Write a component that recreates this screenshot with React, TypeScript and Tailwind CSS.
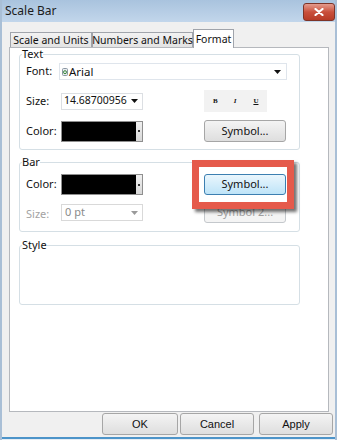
import type { ReactNode } from 'react'

// small combo arrow
const Arrow = ({ grey }: { grey?: boolean }) => (
  <svg width="7" height="4" viewBox="0 0 7 4" className="shrink-0">
    <path d="M0 0h7L3.5 4z" fill={grey ? '#9a9a9a' : '#111'} />
  </svg>
)

const WinButton = ({ children, className = '' }: { children: ReactNode; className?: string }) => (
  <div
    className={`flex items-center justify-center rounded-[3px] border border-[#a6a6a6] bg-linear-to-b from-[#f4f4f4] to-[#dedede] ${className}`}
  >
    {children}
  </div>
)

const ColorBox = () => (
  <div className="flex h-[21px] w-[82px] border border-[#8f8f8f]">
    <div className="flex-1 bg-black" />
    <div className="flex w-[6px] items-center justify-center bg-linear-to-b from-[#f0f0f0] to-[#d8d8d8]">
      <div className="h-[2px] w-[2px] bg-[#333]" />
    </div>
  </div>
)

const Group = ({ title, children, className = '' }: { title: string; children?: ReactNode; className?: string }) => (
  <fieldset className={`w-[281px] rounded-[3px] border border-[#d5dfe5] ${className}`}>
    <legend className="ml-[2px] leading-[12px] text-[11px] text-[#111]">{title}</legend>
    {children}
  </fieldset>
)

const tabs = [
  { label: 'Scale and Units', w: 'w-[82px]' },
  { label: 'Numbers and Marks', w: 'w-[101px]' },
]

export default function App() {
  return (
    <div className="relative flex h-[440px] w-[337px] flex-col overflow-hidden border-x-[2px] border-[#a9bfd6] bg-[#f0f0f0] font-['Noto_Sans',sans-serif] text-[11px] text-[#111]">
      {/* title bar */}
      <div className="flex h-[22px] shrink-0 items-start bg-linear-to-b from-[#a9c3de] to-[#c2d6eb]">
        <span className="pl-[3px] pt-[3px] text-[12px] leading-[16px] text-[#1b1b1b]">Scale Bar</span>
        <div className="ml-auto mt-[3px] flex h-[18px] w-[32px] items-center justify-center rounded-[3px] border border-[#7d3428] bg-linear-to-b from-[#e49b8e] via-[#c9503c] to-[#b73b26]">
          <svg width="10" height="8" viewBox="0 0 10 8">
            <path d="M1.5 1l7 6M8.5 1l-7 6" stroke="#fff" strokeWidth="2.2" strokeLinecap="round" />
          </svg>
        </div>
      </div>

      {/* tabs */}
      <div className="relative z-10 mt-[7px] flex h-[18px] items-end pl-[8px]">
        {tabs.map((t) => (
          <div
            key={t.label}
            className={`flex h-[15px] ${t.w} items-center justify-center whitespace-nowrap border border-b-0 border-[#a0a4ab] bg-linear-to-b from-[#f2f2f2] to-[#e3e3e3] text-[10.5px] leading-[13px]`}
          >
            {t.label}
          </div>
        ))}
        <div className="-mb-px flex h-[19px] w-[41px] items-center justify-center whitespace-nowrap border border-b-0 border-[#a0a4ab] bg-white text-[10.5px] leading-[13px]">
          Format
        </div>
      </div>

      {/* tab panel */}
      <div className="ml-[7px] h-[365px] w-[320px] shrink-0 border border-[#b5b8bd] bg-white pl-[9px]">
        <Group title="Text">
          <div className="mt-[3px] flex h-[17px] items-center pl-[6px]">
            <span className="w-[33px]">Font:</span>
            <div className="flex h-[17px] w-[228px] items-center border border-[#dfe5ec] pl-[2px] pr-[5px]">
              <svg width="6" height="8" viewBox="0 0 6 8" className="mr-[1px]">
                <rect x="0.5" y="0.5" width="5" height="7" rx="1" fill="#e8ecef" stroke="#8b97a3" />
                <circle cx="3" cy="4.2" r="1.5" fill="none" stroke="#3b8a3e" strokeWidth="1" />
              </svg>
              <span className="text-[11.5px]">Arial</span>
              <div className="ml-auto">
                <Arrow />
              </div>
            </div>
          </div>

          <div className="mt-[10px] flex h-[22px] items-center pl-[6px]">
            <span className="w-[35px]">Size:</span>
            <div className="flex h-[17px] w-[82px] items-center border border-[#dcdfe3] pl-[2px] pr-[4px]">
              <span className="whitespace-nowrap text-[10.5px]">14.68700956</span>
              <div className="ml-auto">
                <Arrow />
              </div>
            </div>
            <div className="ml-[61px] flex h-[22px] w-[63px] items-center bg-[#f2f2f2] font-['Liberation_Serif',serif] text-[7px] font-bold">
              <span className="ml-[9px]">B</span>
              <span className="ml-[16px] italic">I</span>
              <span className="ml-[17px] underline">U</span>
            </div>
          </div>

          <div className="mb-[7px] mt-[8px] flex h-[22px] items-center pl-[6px]">
            <span className="w-[35px]">Color:</span>
            <ColorBox />
            <WinButton className="ml-[61px] h-[22px] w-[82px]">Symbol...</WinButton>
          </div>
        </Group>

        <Group title="Bar" className="mt-[6px]">
          <div className="mt-[6px] flex h-[21px] items-center pl-[6px]">
            <span className="w-[35px]">Color:</span>
            <ColorBox />
            <div className="ml-[61px] flex h-[21px] w-[82px] items-center justify-center rounded-[3px] border border-[#3c7fb1] bg-linear-to-b from-[#eaf6fd] to-[#bee4f8]">
              Symbol...
            </div>
          </div>
          <div className="mb-[8px] mt-[7px] flex h-[21px] items-start pl-[6px]">
            <span className="mt-[4px] w-[35px] text-[#a3a3a3]">Size:</span>
            <div className="mt-[2px] flex h-[17px] w-[82px] items-center border border-[#d9d9d9] pl-[3px] pr-[4px] text-[#8a8a8a]">
              <span>0 pt</span>
              <div className="ml-auto">
                <Arrow grey />
              </div>
            </div>
            <div className="ml-[61px] flex h-[21px] w-[82px] items-center justify-center rounded-[3px] border border-[#c4c8cc] bg-[#f4f4f4] text-[#a0a0a0]">
              Symbol 2...
            </div>
          </div>
        </Group>

        <Group title="Style" className="mt-[7px]">
          <div className="h-[53px]" />
        </Group>
      </div>

      {/* dialog buttons */}
      <div className="mt-[1px] flex h-[22px] pl-[100px] font-['Liberation_Sans',sans-serif] text-[11px]">
        <WinButton className="h-[22px] w-[76px] border-[#7a7a7a]">OK</WinButton>
        <WinButton className="ml-[2px] h-[22px] w-[74px] border-[#7a7a7a]">Cancel</WinButton>
        <WinButton className="ml-[5px] h-[22px] w-[74px] border-[#7a7a7a]">Apply</WinButton>
      </div>
      <div className="flex-1" />
      <div className="h-[2px] bg-[#4d94c9]" />
      <div className="h-[1px] bg-[#e6eef5]" />

      {/* annotation highlight */}
      <div className="absolute left-[190px] top-[160px] h-[49px] w-[102px] border-[7px] border-[#e55a4b] shadow-[3px_3px_3px_rgba(0,0,0,0.55)]" />
    </div>
  )
}
